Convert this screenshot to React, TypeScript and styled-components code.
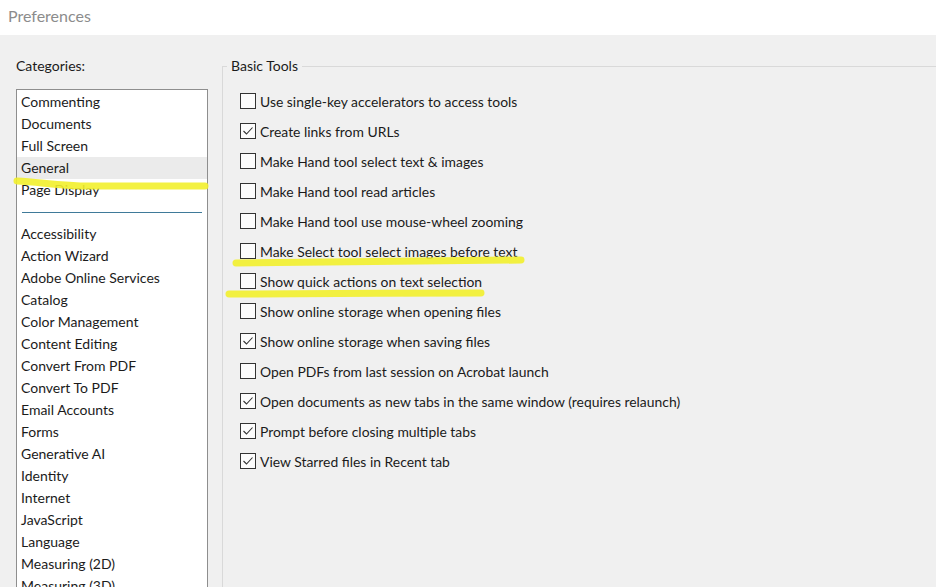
import React from 'react';
import styled, { createGlobalStyle } from 'styled-components';

const GlobalStyle = createGlobalStyle`
  html, body {
    margin: 0;
    padding: 0;
    height: 100%;
    overflow: hidden;
    background: #f0f0f0;
  }
  body {
    font-family: Lato, 'Open Sans', sans-serif;
    color: #1b1b1b;
  }
`;

const groups: string[][] = [
  ['Commenting', 'Documents', 'Full Screen', 'General', 'Page Display'],
  [
    'Accessibility',
    'Action Wizard',
    'Adobe Online Services',
    'Catalog',
    'Color Management',
    'Content Editing',
    'Convert From PDF',
    'Convert To PDF',
    'Email Accounts',
    'Forms',
    'Generative AI',
    'Identity',
    'Internet',
    'JavaScript',
    'Language',
    'Measuring (2D)',
    'Measuring (3D)',
  ],
];

const options: { label: string; checked: boolean }[] = [
  { label: 'Use single-key accelerators to access tools', checked: false },
  { label: 'Create links from URLs', checked: true },
  { label: 'Make Hand tool select text & images', checked: false },
  { label: 'Make Hand tool read articles', checked: false },
  { label: 'Make Hand tool use mouse-wheel zooming', checked: false },
  { label: 'Make Select tool select images before text', checked: false },
  { label: 'Show quick actions on text selection', checked: false },
  { label: 'Show online storage when opening files', checked: false },
  { label: 'Show online storage when saving files', checked: true },
  { label: 'Open PDFs from last session on Acrobat launch', checked: false },
  { label: 'Open documents as new tabs in the same window (requires relaunch)', checked: true },
  { label: 'Prompt before closing multiple tabs', checked: true },
  { label: 'View Starred files in Recent tab', checked: true },
];

const CheckBox: React.FC<{ checked: boolean }> = ({ checked }) => (
  <Box>
    {checked && (
      <svg width="14" height="14" viewBox="0 0 14 14">
        <polyline points="2.5,7 5.5,10 11.5,3.5" fill="none" stroke="#333" strokeWidth="1.1" />
      </svg>
    )}
  </Box>
);

export default function App() {
  return (
    <Window>
      <GlobalStyle />
      <TitleBar>Preferences</TitleBar>
      <Body>
        <Sidebar>
          <SidebarLabel>Categories:</SidebarLabel>
          <CategoryList>
            {groups.map((group, gi) => (
              <React.Fragment key={gi}>
                {gi > 0 && <Divider />}
                {group.map((name) => (
                  <Category key={name} selected={name === 'General'}>
                    {name}
                  </Category>
                ))}
              </React.Fragment>
            ))}
          </CategoryList>
        </Sidebar>
        <Group>
          <Legend>Basic Tools</Legend>
          <OptionList>
            {options.map((o) => (
              <Option key={o.label}>
                <CheckBox checked={o.checked} />
                <span>{o.label}</span>
              </Option>
            ))}
          </OptionList>
        </Group>
      </Body>
      <Marks width="936" height="587" viewBox="0 0 936 587">
        <path d="M17 181 C40 182 60 186 90 186 L205 186" />
        <path d="M236 263 C320 262 440 261 521 260" />
        <path d="M229 294 C300 294 400 293 481 293" />
      </Marks>
    </Window>
  );
}

const Window = styled.div`
  position: relative;
  width: 936px;
  height: 587px;
  overflow: hidden;
  background: #f0f0f0;
`;

const TitleBar = styled.div`
  height: 35px;
  background: #ffffff;
  color: #8c8c8c;
  font-size: 16px;
  line-height: 32px;
  padding-left: 8px;
`;

const Body = styled.div`
  display: flex;
  padding-top: 22px;
`;

const Sidebar = styled.div`
  display: flex;
  flex-direction: column;
  width: 192px;
  margin-left: 16px;
`;

const SidebarLabel = styled.div`
  font-size: 14px;
  line-height: 18px;
  margin-bottom: 14px;
`;

const CategoryList = styled.div`
  background: #ffffff;
  border: 1px solid #8e8e8e;
  padding-top: 1px;
  height: 600px;
`;

const Category = styled.div<{ selected?: boolean }>`
  height: 22px;
  line-height: 22px;
  font-size: 14px;
  padding-left: 4px;
  background: ${(p) => (p.selected ? '#ebebeb' : 'transparent')};
  white-space: nowrap;
`;

const Divider = styled.div`
  height: 1px;
  background: #3f7a99;
  margin: 11px 5px 10px 5px;
`;

const Group = styled.fieldset`
  flex: 1;
  margin: 0 -40px 0 14px;
  padding: 0;
  border: 1px solid #d9d9d9;
  border-right: none;
  height: 600px;
  min-width: 0;
`;

const Legend = styled.legend`
  font-size: 14px;
  padding: 0 4px;
  margin-left: 4px;
  line-height: 18px;
`;

const OptionList = styled.div`
  display: flex;
  flex-direction: column;
  padding: 11px 0 0 17px;
`;

const Option = styled.label`
  display: flex;
  align-items: center;
  gap: 4px;
  height: 30px;
  font-size: 13.9px;
  white-space: nowrap;
`;

const Box = styled.span`
  display: flex;
  align-items: center;
  justify-content: center;
  width: 14px;
  height: 14px;
  border: 1px solid #333;
  background: #fcfcfc;
`;

const Marks = styled.svg`
  position: absolute;
  left: 0;
  top: 0;
  pointer-events: none;
  path {
    fill: none;
    stroke: #f2ef2c;
    stroke-width: 7;
    stroke-linecap: round;
    opacity: 0.9;
  }
`;
